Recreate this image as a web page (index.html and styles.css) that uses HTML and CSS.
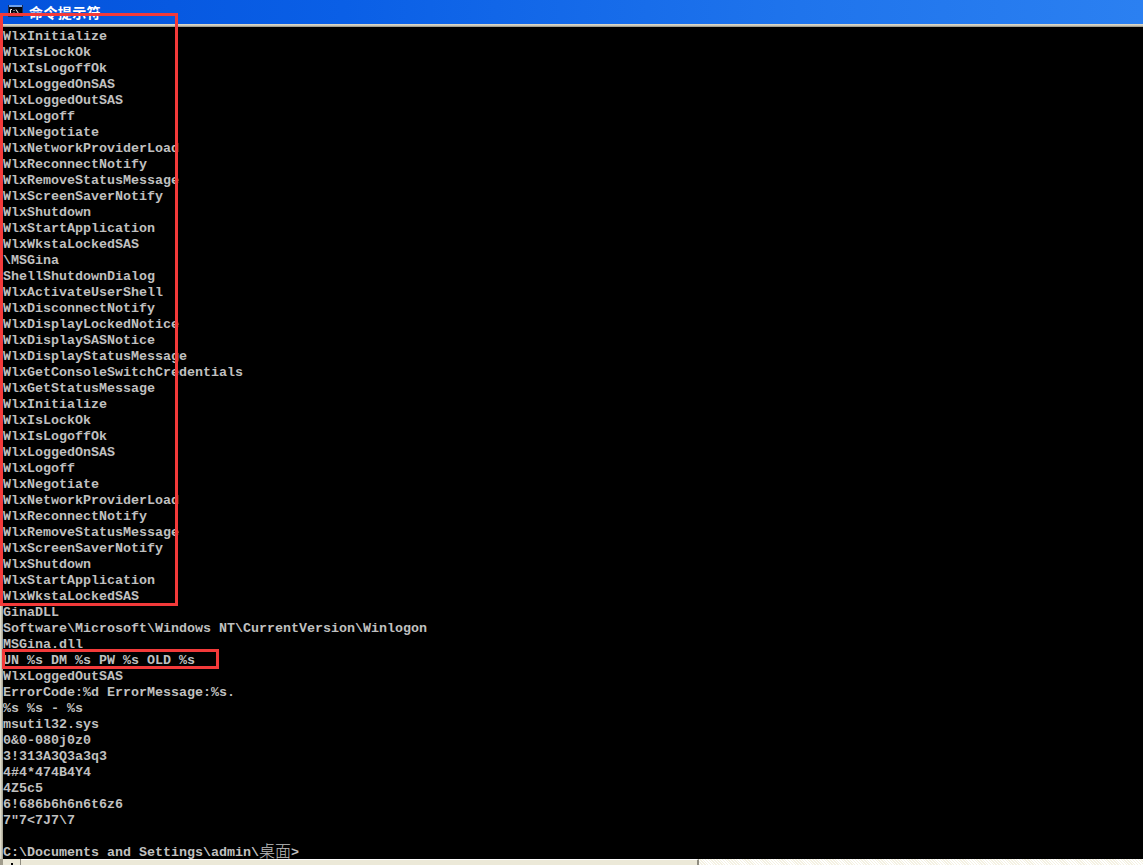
FILE: index.html
```html
<!DOCTYPE html>
<html lang="zh-CN">
<head>
<meta charset="utf-8">
<title>命令提示符</title>
<link rel="stylesheet" href="styles.css">
</head>
<body>
<div class="window">
  <header class="titlebar">
    <svg class="cmd-icon" width="15" height="12" viewBox="0 0 15 12"><rect width="15" height="12" fill="#1c2c54"/><rect x="1" y="0" width="13" height="2" fill="#6fa0ea"/><rect x="1" y="2" width="13" height="9" fill="#05070f"/><path d="M4 4.5H2.5V8.5H4M6 5v1M6 7.5v1M8 4.500l2.500 4" stroke="#f0f0f0" fill="none"/></svg>
    <span class="title-text">命令提示符</span>
  </header>
  <div class="frame-line"></div>
  <div class="console-row">
    <div class="left-edge"></div>
    <pre class="console">WlxInitialize
WlxIsLockOk
WlxIsLogoffOk
WlxLoggedOnSAS
WlxLoggedOutSAS
WlxLogoff
WlxNegotiate
WlxNetworkProviderLoad
WlxReconnectNotify
WlxRemoveStatusMessage
WlxScreenSaverNotify
WlxShutdown
WlxStartApplication
WlxWkstaLockedSAS
\MSGina
ShellShutdownDialog
WlxActivateUserShell
WlxDisconnectNotify
WlxDisplayLockedNotice
WlxDisplaySASNotice
WlxDisplayStatusMessage
WlxGetConsoleSwitchCredentials
WlxGetStatusMessage
WlxInitialize
WlxIsLockOk
WlxIsLogoffOk
WlxLoggedOnSAS
WlxLogoff
WlxNegotiate
WlxNetworkProviderLoad
WlxReconnectNotify
WlxRemoveStatusMessage
WlxScreenSaverNotify
WlxShutdown
WlxStartApplication
WlxWkstaLockedSAS
GinaDLL
Software\Microsoft\Windows NT\CurrentVersion\Winlogon
MSGina.dll
UN %s DM %s PW %s OLD %s
WlxLoggedOutSAS
ErrorCode:%d ErrorMessage:%s.
%s %s - %s
msutil32.sys
0&amp;0-080j0z0
3!313A3Q3a3q3
4#4*474B4Y4
4Z5c5
6!686b6h6n6t6z6
7"7&lt;7J7\7

C:\Documents and Settings\admin\<span class="cjk">桌面</span>&gt;</pre>
  </div>
  <div class="scrollbar">
    <div class="corner"><span class="arrow"></span></div>
    <div class="thumb"></div>
    <div class="track"></div>
  </div>
</div>
<div class="mark mark-list"></div>
<div class="mark mark-line"></div>
</body>
</html>
```
FILE: styles.css
```css
html, body { margin: 0; padding: 0; background: #000; overflow: hidden; }
.window { width: 1143px; height: 865px; display: flex; flex-direction: column; overflow: hidden; background: #000; }
.titlebar { height: 24px; flex: none; display: flex; align-items: flex-start; gap: 6px; padding: 4px 0 0 8px; box-sizing: border-box; background: linear-gradient(90deg, #0453dc 0%, #0a5fe6 30%, #1f74ec 70%, #2b80f1 100%); }
.cmd-icon { flex: none; margin-top: 1px; }
.title-text { color: #fff; font: bold 14px/16px "Noto Sans CJK SC", sans-serif; letter-spacing: 0.4px; }
.frame-line { height: 3px; flex: none; background: linear-gradient(#e4e0d0, #c8c4b4 50%, #8f8c80); }
.console-row { flex: 1; display: flex; min-height: 0; }
.left-edge { width: 3px; flex: none; background: linear-gradient(90deg, #ece9d8, #a09c8c); }
.console { margin: 2px 0 0; color: #c0c0c0; font: bold 13.333px/16px "Liberation Mono", monospace; }
.cjk { display: inline-block; height: 16px; margin-top: -3px; vertical-align: top; font: 300 16px/16px "Noto Sans CJK SC", sans-serif; }
.scrollbar { height: 6px; flex: none; display: flex; background: #ece9d8; }
.corner { width: 21px; flex: none; display: flex; justify-content: center; align-items: flex-end; background: #ece9d8; border-left: 3px solid #a09c8c; box-sizing: border-box; border-right: 1px solid #8f8c80; }
.arrow { width: 2px; height: 2px; background: #000; }
.thumb { width: 676px; flex: none; background: #ece9d8; border-top: 1px solid #fff; border-right: 2px solid #8f8c80; }
.track { flex: 1; background-color: #fbf9f0; background-image: repeating-linear-gradient(45deg, #f4f1e2 0 1px, #fff 1px 2px); }
.mark { position: absolute; border: 3px solid #f33a3a; box-sizing: border-box; }
.mark-list { left: 0; top: 13px; width: 178px; height: 593px; }
.mark-line { left: 2px; top: 649px; width: 217px; height: 20px; }
```
